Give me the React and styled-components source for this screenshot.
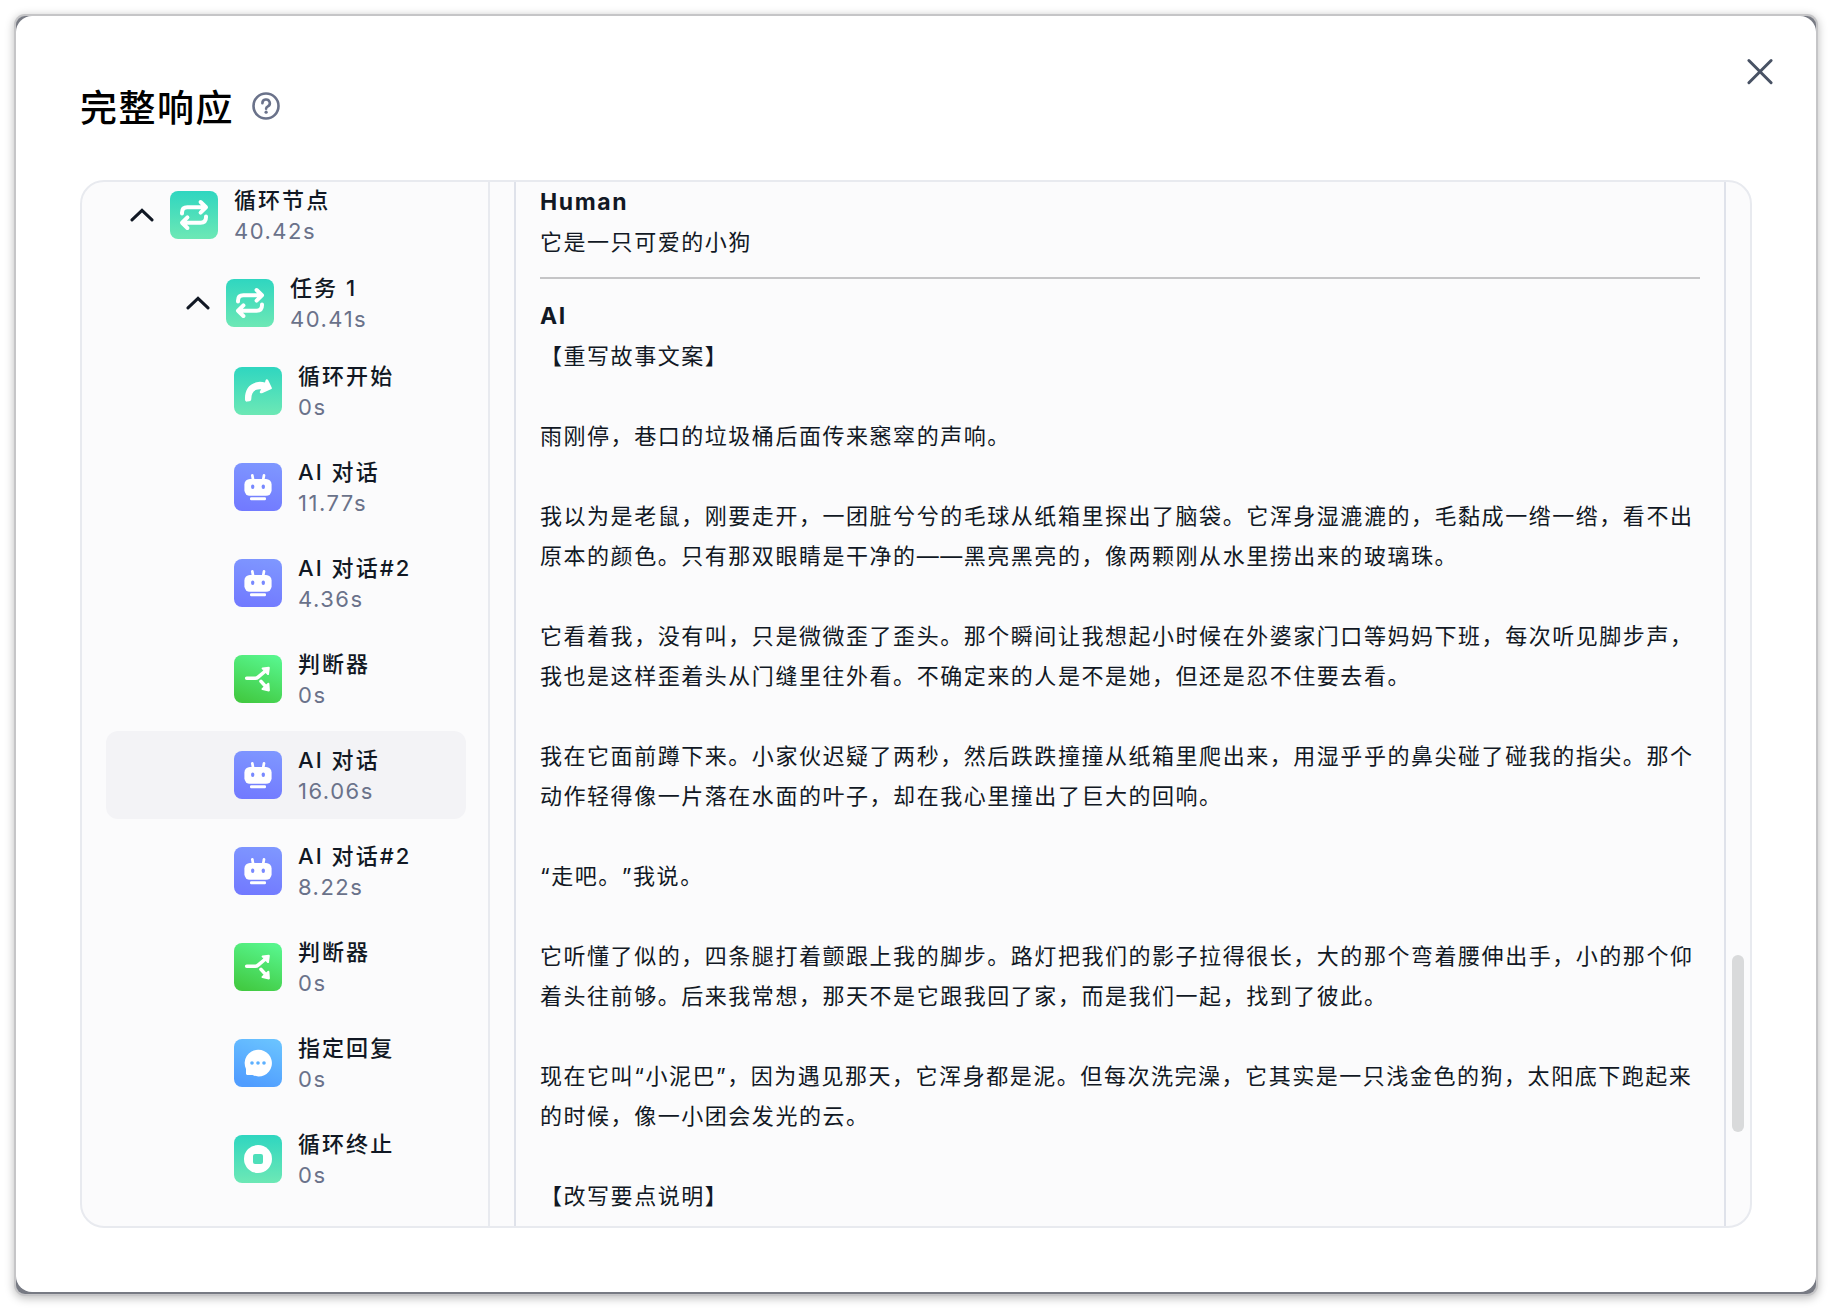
import React from "react";
import styled, { createGlobalStyle } from "styled-components";

const GlobalStyle = createGlobalStyle`
  * {
    box-sizing: border-box;
  }
  body {
    margin: 0;
    background-color: #fff;
    font-family: Inter, "Noto Sans CJK SC", sans-serif;
    text-spacing-trim: space-all;
    color: #111824;
  }
`;

const PageStyles = styled.div`
  height: 1310px;
  padding: 16px 16px 0;
  overflow: hidden;
`;

const Backdrop = styled.div`
  height: 1278px;
  border-radius: 9px;
  background-color: #777a83;
  box-shadow: 0 0 0 2px #c5c5c7, 0 2px 10px 2px rgba(0, 0, 0, 0.28);
`;

const Modal = styled.section`
  height: 1276px;
  padding: 40px 40px 0 64px;
  border-radius: 16px;
  background-color: #fff;
`;

const ModalHeader = styled.header`
  display: flex;
  align-items: flex-start;
  height: 124px;
`;

const Title = styled.h1`
  width: 154px;
  margin: 26px 0 0;
  font-size: 37px;
  font-weight: 500;
  line-height: 54px;
  letter-spacing: 1.5px;
  white-space: nowrap;
  color: #000;
`;

const HelpIcon = styled.svg`
  width: 32px;
  height: 32px;
  margin: 34px 0 0 16px;
  color: #6a728a;
`;

const CloseButton = styled.button`
  display: flex;
  margin: 0 0 0 auto;
  padding: 0;
  border: 0;
  background: none;
  color: #485264;
`;

const Panel = styled.div`
  display: flex;
  width: 1672px;
  height: 1048px;
  border: 2px solid #e8eaef;
  border-radius: 24px;
  background-color: #fbfbfc;
  overflow: hidden;
`;

const Sidebar = styled.aside`
  width: 408px;
  padding: 0 22px 0 24px;
  border-right: 2px solid #e8eaef;
`;

const NodeList = styled.div`
  margin-top: -11px;
`;

const NodeRow = styled.div`
  display: flex;
  align-items: center;
  gap: 16px;
  height: 88px;
  padding-left: ${(props) => props.$indent}px;
  margin-bottom: ${(props) => (props.$parent ? 0 : 8)}px;
  border-radius: 12px;
  background-color: ${(props) => (props.$active ? "#f3f3f6" : "transparent")};
`;

const Chevron = styled.svg`
  width: 24px;
  height: 24px;
  flex-shrink: 0;
`;

const NodeIcon = styled.div`
  width: 48px;
  height: 48px;
  flex-shrink: 0;
  border-radius: 8px;
  background: ${(props) => props.$fill};
`;

const NodeText = styled.div`
  padding-top: 2px;
  white-space: nowrap;
`;

const NodeName = styled.div`
  font-size: 22px;
  font-weight: 500;
  line-height: 31px;
  letter-spacing: 2.05px;
`;

const NodeTime = styled.div`
  font-size: 22px;
  line-height: 31px;
  letter-spacing: 1.5px;
  color: #6a728a;
`;

const Detail = styled.main`
  width: 1212px;
  margin-left: 24px;
  padding: 0 24px;
  border-left: 2px solid #dfe2ea;
  border-right: 2px solid #dfe2ea;
  font-size: 22px;
  line-height: 40px;
  letter-spacing: 1.54px;
  overflow: hidden;
`;

const Role = styled.div`
  font-size: 23px;
  font-weight: 700;
  letter-spacing: 1.6px;
`;

const Message = styled.div`
  white-space: pre-wrap;
`;

const Divider = styled.hr`
  height: 2px;
  margin: 15px 0 17px;
  border: 0;
  background-color: #c5c5c7;
`;

const ScrollTrack = styled.div`
  width: 24px;
  padding: 773px 6px 0;
`;

const ScrollThumb = styled.div`
  height: 177px;
  border-radius: 6px;
  background-color: #d9dadb;
`;

const fills = {
  teal: "linear-gradient(180deg, #2fd6c0 0%, #6de8b5 100%)",
  purple: "linear-gradient(190deg, #7f98ff 0%, #7178ff 100%)",
  green: "linear-gradient(200deg, #57f58c 8%, #42ca42 92%)",
  blue: "linear-gradient(200deg, #69c2ff 8%, #509dff 88%)",
};

const icons = {
  loop: {
    fill: fills.teal,
    shape: (
      <g
        fill="none"
        stroke="#fff"
        strokeWidth="4"
        strokeLinecap="round"
        strokeLinejoin="round"
      >
        <path d="M12 22.5v-.8c0-3.6 1.8-5.4 5.4-5.4H35M30.6 11l5.4 5.3-5.4 5.3" />
        <path d="M36 25.5v.8c0 3.6-1.8 5.4-5.4 5.4H13M17.4 26.4 12 31.7l5.4 5.3" />
      </g>
    ),
  },
  start: {
    fill: fills.teal,
    shape: (
      <path
        fill="#fff"
        d="M11 32.5c-.4-9.6 4.2-17 14.8-17.7 2 0 3.8.2 5.2.7l.5-2c.4-1.5 1.8-1.7 2.6-.4l3.6 7.3c.4.9.1 1.6-.8 1.9L28 26.2c-1.7.5-2.8-.6-2-2l1.1-1.9c-6.7-.6-9.7 3.2-9.8 9.5 0 1.4-.6 2.2-2 2.5l-2.1.3c-1.3.2-2.1-.6-2.2-2.1Z"
      />
    ),
  },
  robot: {
    fill: fills.purple,
    shape: (
      <>
        <path
          d="m18.3 12.3.9 5M30 12.3l-.9 5"
          stroke="#fff"
          strokeWidth="2.7"
          strokeLinecap="round"
        />
        <rect x="10.4" y="16" width="27.2" height="16.8" rx="5.5" fill="#fff" />
        <rect x="16" y="34.3" width="16" height="2.9" rx="1.2" fill="#fff" />
        <ellipse cx="18.7" cy="23.7" rx="1.7" ry="2.2" fill="#7889ff" />
        <ellipse cx="29.3" cy="23.7" rx="1.7" ry="2.2" fill="#7889ff" />
      </>
    ),
  },
  branch: {
    fill: fills.green,
    shape: (
      <>
        <path
          d="M12.7 23.3h8.6c1.2 0 1.9-.3 2.8-1.1L32 15.5M27 26.4l5.5 6"
          fill="none"
          stroke="#fff"
          strokeWidth="3.6"
          strokeLinecap="round"
        />
        <path
          d="m28.6 13.4 6.2-.6-.8 6.3ZM28.5 34.1l6.4 1.3-.5-6.7Z"
          fill="#fff"
          stroke="#fff"
          strokeWidth="2"
          strokeLinejoin="round"
        />
      </>
    ),
  },
  reply: {
    fill: fills.blue,
    shape: (
      <>
        <path
          d="M24 10.8a13.3 13.3 0 1 1-5.5 25.1h-5.2c-.9 0-1.3-.4-1.3-1.3v-4.7A13.3 13.3 0 0 1 24 10.8Z"
          fill="#fff"
        />
        <circle cx="18" cy="24" r="1.8" fill="#5cb0ff" />
        <circle cx="24" cy="24" r="1.8" fill="#5cb0ff" />
        <circle cx="30" cy="24" r="1.8" fill="#5cb0ff" />
      </>
    ),
  },
  stop: {
    fill: fills.teal,
    shape: (
      <>
        <circle cx="24" cy="24" r="14" fill="#fff" />
        <rect x="19" y="19" width="10" height="10" rx="2" fill="#4edfba" />
      </>
    ),
  },
};

const nodes = [
  { name: "循环节点", time: "40.42s", icon: "loop", indent: 24, parent: true },
  { name: "任务 1", time: "40.41s", icon: "loop", indent: 80, parent: true },
  { name: "循环开始", time: "0s", icon: "start", indent: 128 },
  { name: "AI 对话", time: "11.77s", icon: "robot", indent: 128 },
  { name: "AI 对话#2", time: "4.36s", icon: "robot", indent: 128 },
  { name: "判断器", time: "0s", icon: "branch", indent: 128 },
  { name: "AI 对话", time: "16.06s", icon: "robot", indent: 128, active: true },
  { name: "AI 对话#2", time: "8.22s", icon: "robot", indent: 128 },
  { name: "判断器", time: "0s", icon: "branch", indent: 128 },
  { name: "指定回复", time: "0s", icon: "reply", indent: 128 },
  { name: "循环终止", time: "0s", icon: "stop", indent: 128 },
];

const answer = `【重写故事文案】

雨刚停，巷口的垃圾桶后面传来窸窣的声响。

我以为是老鼠，刚要走开，一团脏兮兮的毛球从纸箱里探出了脑袋。它浑身湿漉漉的，毛黏成一绺一绺，看不出原本的颜色。只有那双眼睛是干净的——黑亮黑亮的，像两颗刚从水里捞出来的玻璃珠。

它看着我，没有叫，只是微微歪了歪头。那个瞬间让我想起小时候在外婆家门口等妈妈下班，每次听见脚步声，我也是这样歪着头从门缝里往外看。不确定来的人是不是她，但还是忍不住要去看。

我在它面前蹲下来。小家伙迟疑了两秒，然后跌跌撞撞从纸箱里爬出来，用湿乎乎的鼻尖碰了碰我的指尖。那个动作轻得像一片落在水面的叶子，却在我心里撞出了巨大的回响。

“走吧。”我说。

它听懂了似的，四条腿打着颤跟上我的脚步。路灯把我们的影子拉得很长，大的那个弯着腰伸出手，小的那个仰着头往前够。后来我常想，那天不是它跟我回了家，而是我们一起，找到了彼此。

现在它叫“小泥巴”，因为遇见那天，它浑身都是泥。但每次洗完澡，它其实是一只浅金色的狗，太阳底下跑起来的时候，像一小团会发光的云。

【改写要点说明】`;

function ResponseNode({ node }) {
  const icon = icons[node.icon];
  return (
    <NodeRow $indent={node.indent} $parent={node.parent} $active={node.active}>
      {node.parent && (
        <Chevron viewBox="0 0 24 24" fill="none">
          <path
            d="m2 16.9 10-9.6 10 9.6"
            stroke="#111824"
            strokeWidth="3"
            strokeLinecap="round"
          />
        </Chevron>
      )}
      <NodeIcon $fill={icon.fill}>
        <svg width="48" height="48" viewBox="0 0 48 48">
          {icon.shape}
        </svg>
      </NodeIcon>
      <NodeText>
        <NodeName>{node.name}</NodeName>
        <NodeTime>{node.time}</NodeTime>
      </NodeText>
    </NodeRow>
  );
}

function App() {
  return (
    <PageStyles>
      <GlobalStyle />
      <Backdrop>
        <Modal>
          <ModalHeader>
            <Title>完整响应</Title>
            <HelpIcon viewBox="0 0 32 32" fill="none" stroke="currentColor">
              <circle cx="16" cy="16" r="12.5" strokeWidth="2.6" />
              <path
                d="M12.4 13.2a3.7 3.7 0 1 1 5.5 3.2c-1.2.7-1.8 1.1-1.8 2.3"
                strokeWidth="2.6"
                strokeLinecap="round"
              />
              <circle cx="16.1" cy="22.2" r="1.6" fill="currentColor" stroke="none" />
            </HelpIcon>
            <CloseButton aria-label="close">
              <svg width="32" height="32" viewBox="0 0 32 32" fill="none">
                <path
                  d="m4.9 4.5 22.2 22.2M27.1 4.5 4.9 26.7"
                  stroke="currentColor"
                  strokeWidth="3"
                  strokeLinecap="round"
                />
              </svg>
            </CloseButton>
          </ModalHeader>
          <Panel>
            <Sidebar>
              <NodeList>
                {nodes.map((node, index) => (
                  <ResponseNode key={index} node={node} />
                ))}
              </NodeList>
            </Sidebar>
            <Detail>
              <Role>Human</Role>
              <Message>它是一只可爱的小狗</Message>
              <Divider />
              <Role>AI</Role>
              <Message>{answer}</Message>
            </Detail>
            <ScrollTrack>
              <ScrollThumb />
            </ScrollTrack>
          </Panel>
        </Modal>
      </Backdrop>
    </PageStyles>
  );
}

export default App;
